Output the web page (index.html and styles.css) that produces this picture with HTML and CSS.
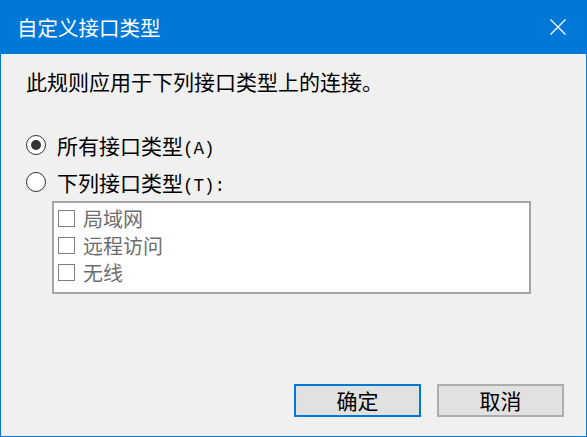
FILE: index.html
```html
<!DOCTYPE html>
<html lang="zh-CN">
<head>
<meta charset="utf-8">
<title>自定义接口类型</title>
<link rel="stylesheet" href="styles.css">
</head>
<body>
<div class="window">
  <div class="titlebar">
    <span class="title">自定义接口类型</span>
    <svg class="close" width="16" height="16" viewBox="0 0 16 16"><path d="M0.5 0.5 L15.5 15.5 M15.5 0.5 L0.5 15.5" stroke="#fff" stroke-width="1.3" fill="none"/></svg>
  </div>
  <div class="content">
    <div class="desc">此规则应用于下列接口类型上的连接。</div>
    <div class="radios">
      <div class="radio-row"><span class="radio checked"></span><span>所有接口类型<span class="latin">(A)</span></span></div>
      <div class="radio-row"><span class="radio"></span><span>下列接口类型<span class="latin">(T):</span></span></div>
    </div>
    <div class="listbox">
      <div class="item"><span class="check"></span><span>局域网</span></div>
      <div class="item"><span class="check"></span><span>远程访问</span></div>
      <div class="item"><span class="check"></span><span>无线</span></div>
    </div>
    <div class="footer">
      <button class="btn default">确定</button>
      <button class="btn">取消</button>
    </div>
  </div>
</div>
</body>
</html>
```
FILE: styles.css
```css
html, body {
  margin: 0;
  padding: 0;
}
body {
  font-family: "Noto Sans CJK SC", "Noto Sans", sans-serif;
  font-size: 21px;
  color: #000;
  background: #f0f0f0;
}
.window {
  width: 587px;
  height: 437px;
  box-sizing: border-box;
  border: 1px solid #0078d7;
  background: #f0f0f0;
  display: flex;
  flex-direction: column;
}
.titlebar {
  height: 53px;
  flex: none;
  background: #0078d7;
  display: flex;
  align-items: center;
  justify-content: space-between;
  padding: 0 20px 0 16px;
  color: #fff;
}
.title {
  font-size: 20.5px;
  line-height: 1;
  margin-top: -1px;
}
.close {
  display: block;
  margin-bottom: 1px;
}
.content {
  flex: 1;
  display: flex;
  flex-direction: column;
  padding: 0 22px 19px 25px;
}
.desc {
  margin-top: 13px;
  line-height: 28px;
}
.latin {
  font-family: "Liberation Mono", monospace;
  font-size: 17.5px;
}
.radios {
  margin-top: 31px;
  display: flex;
  flex-direction: column;
}
.radio-row {
  height: 37px;
  display: flex;
  align-items: center;
  gap: 11px;
}
.radio {
  width: 20px;
  height: 20px;
  box-sizing: border-box;
  border: 1.5px solid #333;
  border-radius: 50%;
  background: #fff;
  display: flex;
  align-items: center;
  justify-content: center;
}
.radio.checked::after {
  content: "";
  width: 10px;
  height: 10px;
  border-radius: 50%;
  background: #333;
}
.listbox {
  margin: 1px 0 0 26px;
  width: 479px;
  height: 93px;
  box-sizing: border-box;
  border: 2px solid #a2a6aa;
  background: #fff;
  padding: 2px 0 0 4px;
  color: #6d6d6d;
  font-size: 20px;
}
.item {
  height: 27px;
  display: flex;
  align-items: center;
  gap: 8px;
}
.check {
  width: 17px;
  height: 17px;
  box-sizing: border-box;
  border: 1px solid #7f7f7f;
  background: #fff;
  flex: none;
}
.footer {
  margin-top: auto;
  display: flex;
  justify-content: flex-end;
  gap: 16px;
}
.btn {
  width: 127px;
  height: 33px;
  box-sizing: border-box;
  border: 2px solid #adadad;
  background: #e1e1e1;
  font-family: inherit;
  font-size: 21px;
  color: #000;
  padding: 0;
  line-height: 1;
}
.btn.default {
  border-color: #0078d7;
}
```
